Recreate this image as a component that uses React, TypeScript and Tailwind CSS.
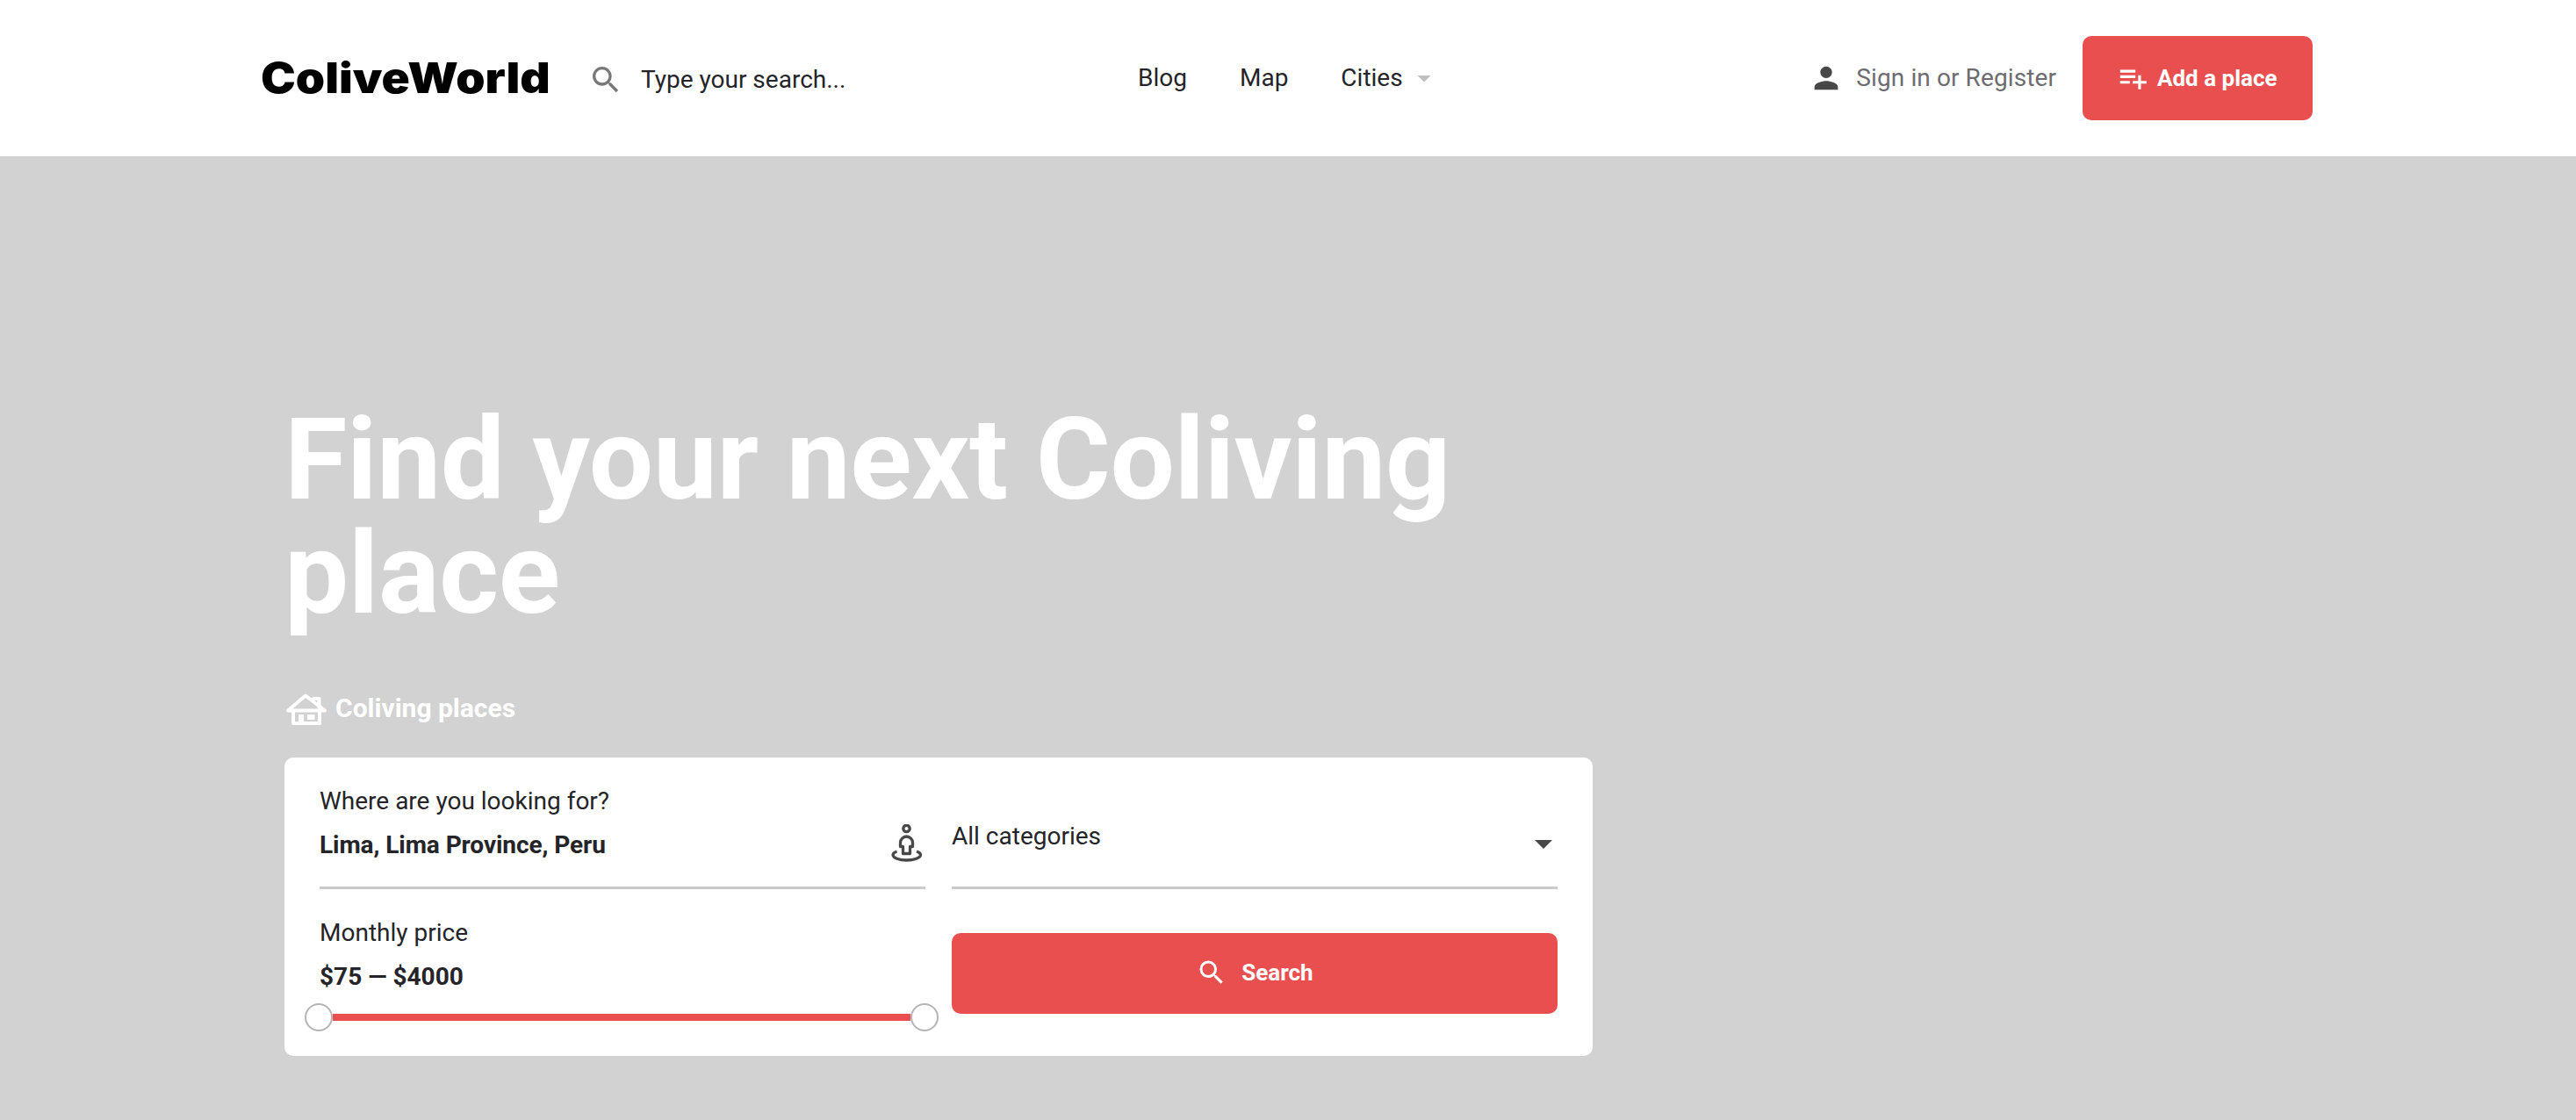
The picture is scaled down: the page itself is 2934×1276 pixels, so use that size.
import { MdArrowDropDown, MdPerson, MdPlaylistAdd, MdSearch } from "react-icons/md";

const navLinks = ["Blog", "Map", "Cities"];

function HouseIcon() {
  return (
    <svg className="mt-[2px]" width="46" height="36" viewBox="0 0 46 36" fill="none" stroke="white" strokeWidth="4" strokeLinejoin="round" strokeLinecap="round">
      <path d="M2 19.500 22 2.500 44 19.500Z" />
      <path d="M8 20v14h30V20" />
      <path d="M31 6h6.500v10" />
      <path d="M14 24h6v9h-6zM24 24h8.500v6H24z" fill="white" stroke="none" />
    </svg>
  );
}

function LocateIcon() {
  return (
    <svg width="36" height="43" viewBox="0 0 36 43" fill="none" stroke="#484848" strokeWidth="3.300">
      <circle cx="17.500" cy="5" r="3.700" />
      <path d="M13.500 33.500V25.500H10.500V21a7 7 0 0 1 14 0v4.500H21.500v8z" strokeLinejoin="round" />
      <path d="M6.500 31C3.500 32 2 33.500 2 35c0 3.300 7 6 15.500 6S33.500 38.300 33.500 35c0-1.500-1.500-3-4.500-4" />
    </svg>
  );
}

export default function App() {
  return (
    <div className="h-[1276px] w-full overflow-hidden bg-white font-['Roboto',sans-serif] text-[28px] leading-[50px] text-[#242429]">
      {/* Header */}
      <header className="flex h-[178px] items-center pr-[300px] pl-[297px]">
        <a className="w-[372px] origin-left scale-x-[1.11] font-['Inter',sans-serif] text-[48px] font-black text-black">
          ColiveWorld
        </a>
        <div className="flex w-[627px] items-center pt-[3px]">
          <MdSearch className="ml-px size-10 text-[#787878]" />
          <span className="ml-[20px]">Type your search...</span>
        </div>
        <nav className="flex flex-1 items-center gap-[60px]">
          {navLinks.map((link) => (
            <a key={link}>{link}</a>
          ))}
          <MdArrowDropDown className="-ml-[54px] size-9 text-[#bfbfbf]" />
        </nav>
        <div className="flex items-center">
          <MdPerson className="size-10 text-[#484848]" />
          <span className="ml-[14px] tracking-[0.1px] text-[#6d6d71]">Sign in or Register</span>
          <button className="ml-[30px] flex h-24 w-[262px] items-center rounded-[10px] bg-[#e94f4f] pl-[38px] text-[26px] font-bold text-white">
            <MdPlaylistAdd className="mr-[9px] size-[38px]" />
            Add a place
          </button>
        </div>
      </header>

      {/* Hero */}
      <section className="h-[1098px] bg-[#d2d2d2] pt-[281px] pl-[324px]">
        <h1 className="w-[1490px] text-[130px] leading-[130px] font-bold tracking-[-0.3px] text-white">
          Find your next Coliving place
        </h1>
        <div className="mt-[66px] flex h-[44px] items-center gap-[10px] pl-[2px] text-[30px] font-bold text-white">
          <HouseIcon />
          Coliving places
        </div>

        {/* Search form */}
        <div className="mt-[34px] grid h-[340px] w-[1490px] grid-cols-2 content-start gap-x-[30px] rounded-[10px] bg-white px-10 pt-[25px]">
          <div className="flex h-[125px] justify-between border-b-3 border-[#cacaca]">
            <div>
              <p>Where are you looking for?</p>
              <p className="font-bold tracking-[-0.07px]">Lima, Lima Province, Peru</p>
            </div>
            <div className="pt-[51px] pr-[3px]">
              <LocateIcon />
            </div>
          </div>
          <div className="flex h-[125px] justify-between border-b-3 border-[#cacaca] pt-10">
            <p>All categories</p>
            <MdArrowDropDown className="mt-[9px] -mr-[8px] size-12 text-[#484848]" />
          </div>
          <div className="pt-[25px]">
            <p>Monthly price</p>
            <p className="font-bold">$75 — $4000</p>
            <div className="-mr-[15px] -ml-[17px] mt-[5px] flex items-center">
              <span className="size-8 rounded-full border-2 border-[#b4b4b4] bg-white" />
              <span className="h-2 flex-1 bg-[#e94f4f]" />
              <span className="size-8 rounded-full border-2 border-[#b4b4b4] bg-white" />
            </div>
          </div>
          <button className="mt-[50px] flex h-[92px] items-center justify-center rounded-[10px] bg-[#e94f4f] pb-[3px] text-[26px] font-bold text-white">
            <MdSearch className="mr-[16px] size-9" />
            Search
          </button>
        </div>
      </section>
    </div>
  );
}
